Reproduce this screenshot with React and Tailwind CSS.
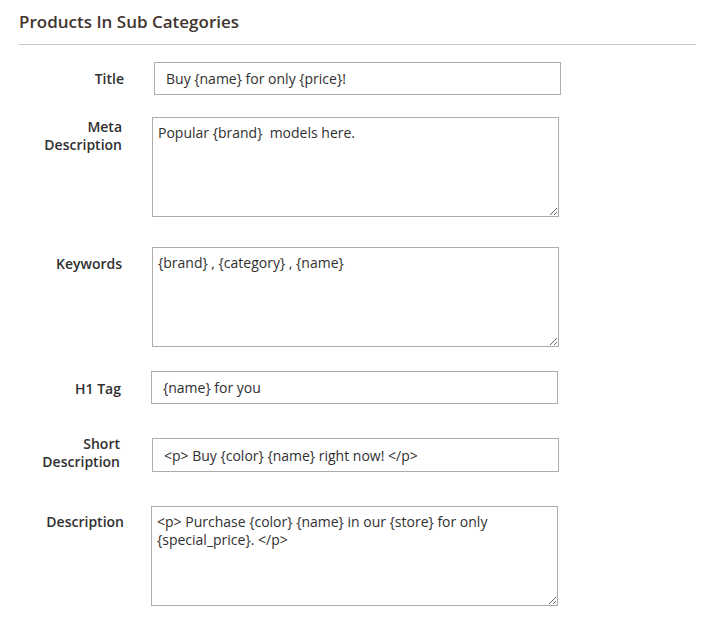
import React from 'react';

const font = { fontFamily: '"Open Sans", "Liberation Sans", sans-serif' };

const fields = [
  { label: ['Title'], type: 'input', value: 'Buy {name} for only {price}!', rowMt: 'mt-[17px]', labelW: 'w-[105px]', labelMt: 'mt-[8px]', fieldMl: 'ml-[30px]', h: 'h-[33px]' },
  { label: ['Meta', 'Description'], type: 'textarea', value: 'Popular {brand}  models here.', rowMt: 'mt-[22px]', labelW: 'w-[103px]', labelMt: 'mt-[1px]', fieldMl: 'ml-[30px]' },
  { label: ['Keywords'], type: 'textarea', value: '{brand} , {category} , {name}', rowMt: 'mt-[30px]', labelW: 'w-[103px]', labelMt: 'mt-[8px]', fieldMl: 'ml-[30px]' },
  { label: ['H1 Tag'], type: 'input', value: '{name} for you', rowMt: 'mt-[24px]', labelW: 'w-[102px]', labelMt: 'mt-[9px]', fieldMl: 'ml-[30px]', h: 'h-[33px]' },
  { label: ['Short', 'Description'], type: 'input', value: '<p> Buy {color} {name} right now! </p>', rowMt: 'mt-[34px]', labelW: 'w-[101px]', labelMt: '-mt-[3px]', fieldMl: 'ml-[32px]', h: 'h-[34px]' },
  { label: ['Description'], type: 'textarea', value: '<p> Purchase {color} {name} in our {store} for only {special_price}. </p>', rowMt: 'mt-[34px]', labelW: 'w-[105px]', labelMt: 'mt-[7px]', fieldMl: 'ml-[27px]' },
];

function FieldRow({ field }) {
  return (
    <div className={`flex items-start ${field.rowMt}`}>
      <label className={`${field.labelW} ${field.labelMt} shrink-0 text-right text-[14px] leading-[18px] font-semibold text-[#303030]`}>
        {field.label.map((line) => (
          <span key={line} className="block">{line}</span>
        ))}
      </label>
      {field.type === 'input' ? (
        <input
          type="text"
          defaultValue={field.value}
          className={`${field.fieldMl} ${field.h} w-[407px] border border-[#adadad] bg-white pl-[11px] pr-[8px] text-[14px] text-[#303030] outline-none`}
          style={font}
        />
      ) : (
        <textarea
          defaultValue={field.value}
          className={`${field.fieldMl} block h-[100px] w-[407px] border border-[#adadad] bg-white pl-[5px] pr-[8px] pt-[6px] text-[14px] leading-[18px] text-[#303030] outline-none`}
          style={font}
        />
      )}
    </div>
  );
}

export default function App() {
  return (
    <div className="min-h-screen bg-white pl-[19px] pr-[10px] pt-[12px]" style={font}>
      {/* Section title */}
      <div className="border-b border-[#cfcac4] pb-[12px]">
        <h2 className="text-[17px] leading-[20px] font-semibold text-[#41362f]">Products In Sub Categories</h2>
      </div>

      {/* Fields */}
      <div className="pb-6">
        {fields.map((f) => (
          <FieldRow key={f.label.join(' ')} field={f} />
        ))}
      </div>
    </div>
  );
}
